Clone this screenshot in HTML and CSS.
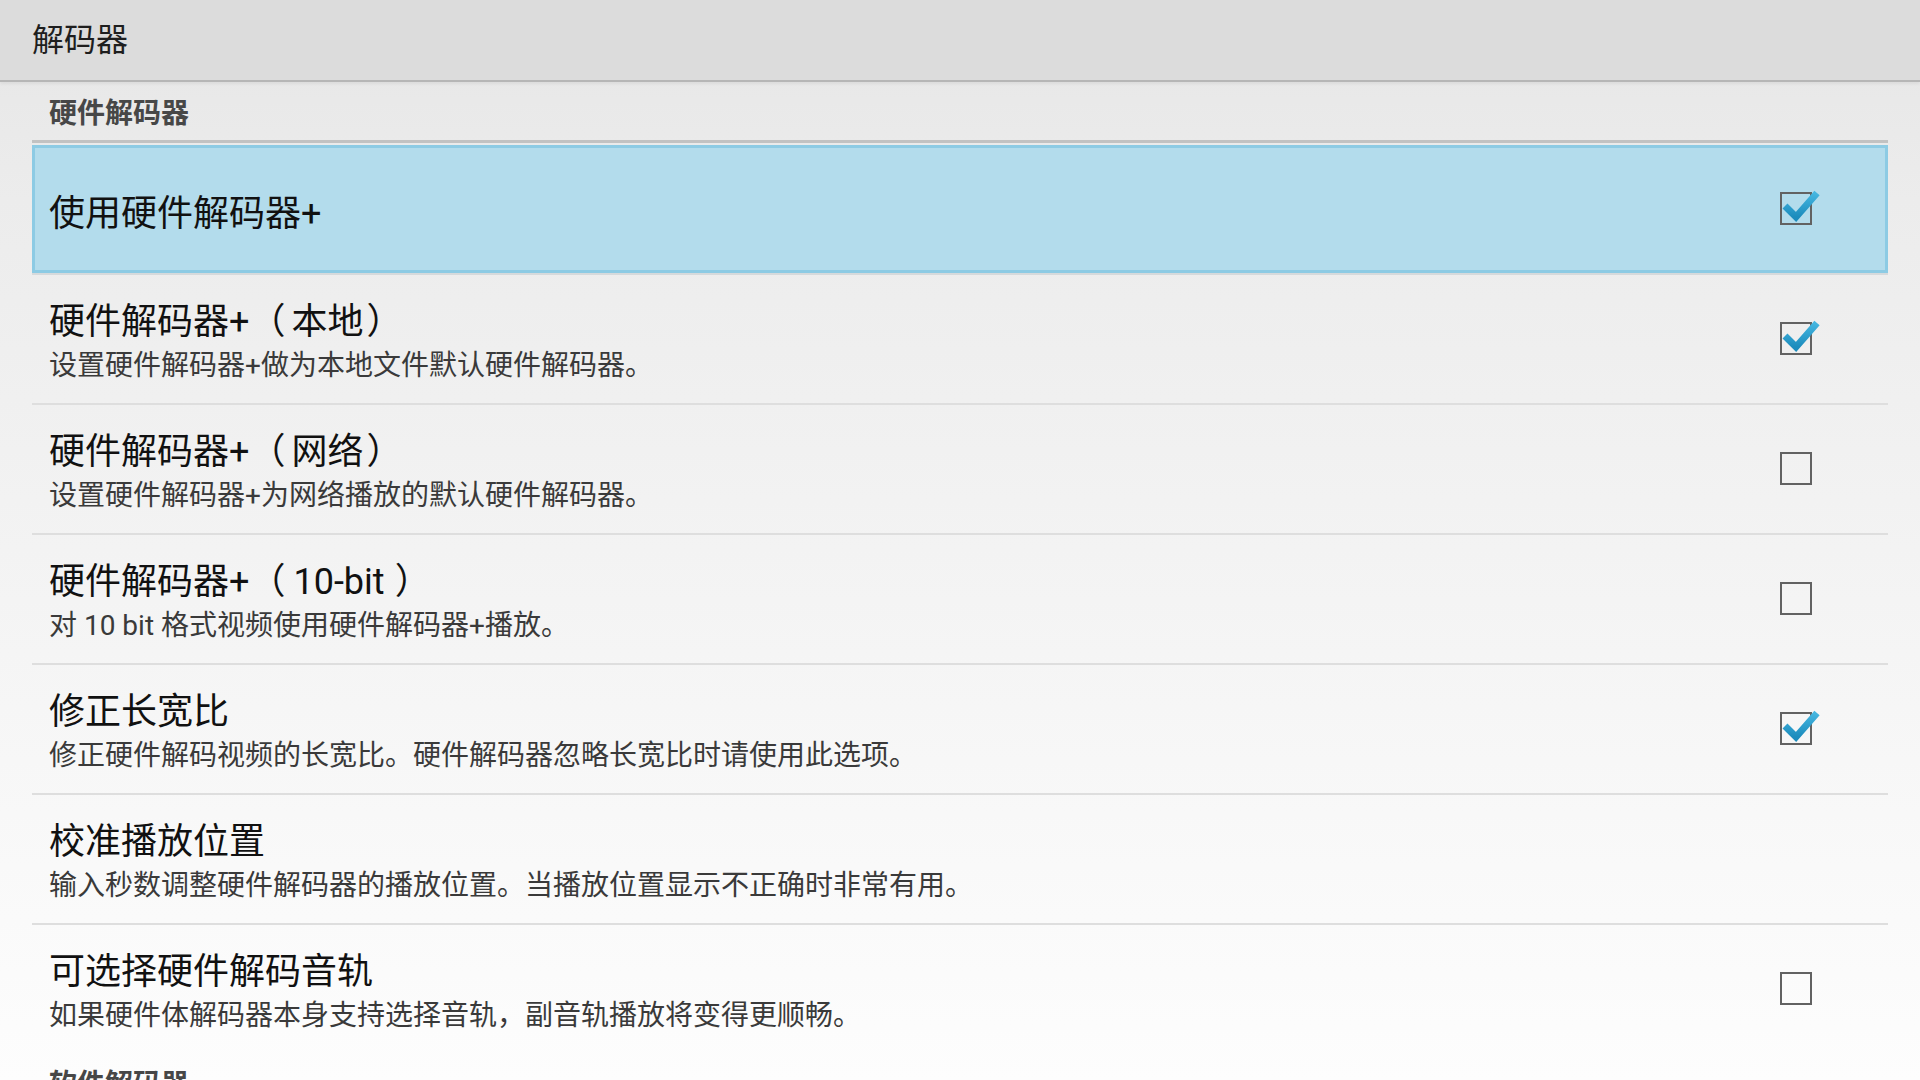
FILE: index.html
```html
<!DOCTYPE html>
<html lang="zh-CN">
<head>
<meta charset="utf-8">
<title>解码器</title>
<link rel="stylesheet" href="styles.css">
</head>
<body>
<header class="appbar">
  <h1 class="appbar-title">解码器</h1>
</header>

<main class="settings">
  <h2 class="category">硬件解码器</h2>

  <div class="pref selected">
    <div class="pref-text">
      <div class="pref-title">使用硬件解码器+</div>
    </div>
    <svg class="checkbox" viewBox="0 0 42 40" width="42" height="40" aria-hidden="true">
      <defs>
        <linearGradient id="tick" x1="0" y1="0" x2="0" y2="1">
          <stop offset="0" stop-color="#45b6e0"/>
          <stop offset="1" stop-color="#1c8cbd"/>
        </linearGradient>
      </defs>
      <rect class="box" x="1" y="4" width="30" height="31"/>
      <path class="tick" d="M5 17 L16 28 L37 4"/>
    </svg>
  </div>

  <div class="pref">
    <div class="pref-text">
      <div class="pref-title">硬件解码器+<span class="paren-open">（</span>本地<span class="paren-close">）</span></div>
      <div class="pref-summary">设置硬件解码器+做为本地文件默认硬件解码器。</div>
    </div>
    <svg class="checkbox" viewBox="0 0 42 40" width="42" height="40" aria-hidden="true">
      <rect class="box" x="1" y="4" width="30" height="31"/>
      <path class="tick" d="M5 17 L16 28 L37 4"/>
    </svg>
  </div>

  <div class="pref">
    <div class="pref-text">
      <div class="pref-title">硬件解码器+<span class="paren-open">（</span>网络<span class="paren-close">）</span></div>
      <div class="pref-summary">设置硬件解码器+为网络播放的默认硬件解码器。</div>
    </div>
    <svg class="checkbox" viewBox="0 0 42 40" width="42" height="40" aria-hidden="true">
      <rect class="box" x="1" y="4" width="30" height="31"/>
    </svg>
  </div>

  <div class="pref">
    <div class="pref-text">
      <div class="pref-title">硬件解码器+<span class="paren-open latin">（</span>10-bit<span class="paren-close latin">）</span></div>
      <div class="pref-summary">对 10 bit 格式视频使用硬件解码器+播放。</div>
    </div>
    <svg class="checkbox" viewBox="0 0 42 40" width="42" height="40" aria-hidden="true">
      <rect class="box" x="1" y="4" width="30" height="31"/>
    </svg>
  </div>

  <div class="pref">
    <div class="pref-text">
      <div class="pref-title">修正长宽比</div>
      <div class="pref-summary">修正硬件解码视频的长宽比。硬件解码器忽略长宽比时请使用此选项。</div>
    </div>
    <svg class="checkbox" viewBox="0 0 42 40" width="42" height="40" aria-hidden="true">
      <rect class="box" x="1" y="4" width="30" height="31"/>
      <path class="tick" d="M5 17 L16 28 L37 4"/>
    </svg>
  </div>

  <div class="pref">
    <div class="pref-text">
      <div class="pref-title">校准播放位置</div>
      <div class="pref-summary">输入秒数调整硬件解码器的播放位置。当播放位置显示不正确时非常有用。</div>
    </div>
  </div>

  <div class="pref last">
    <div class="pref-text">
      <div class="pref-title">可选择硬件解码音轨</div>
      <div class="pref-summary">如果硬件体解码器本身支持选择音轨，副音轨播放将变得更顺畅。</div>
    </div>
    <svg class="checkbox" viewBox="0 0 42 40" width="42" height="40" aria-hidden="true">
      <rect class="box" x="1" y="4" width="30" height="31"/>
    </svg>
  </div>

  <h2 class="category">软件解码器</h2>
</main>
</body>
</html>
```

FILE: styles.css
```css
* {
  box-sizing: border-box;
}

html, body {
  margin: 0;
  padding: 0;
}

body {
  width: 1920px;
  height: 1080px;
  overflow: hidden;
  font-family: Roboto, "Noto Sans CJK SC", sans-serif;
  color: #151515;
  background: linear-gradient(to bottom, #e6e6e6 0px, #ececec 200px, #f4f4f4 600px, #fdfdfd 1080px);
}

/* top action bar */
.appbar {
  height: 82px;
  background: #dcdcdc;
  border-bottom: 2px solid #b6b6b6;
  box-shadow: 0 2px 3px rgba(0, 0, 0, 0.06);
  display: flex;
  align-items: center;
  padding-left: 32px;
}

.appbar-title {
  margin: 0;
  font-size: 32px;
  font-weight: 400;
  line-height: 40px;
  color: #1e1e1e;
}

/* preference list */
.settings {
  padding: 0 32px;
}

.category {
  margin: 0 0 2px;
  padding: 18px 0 12px 17px;
  font-size: 28px;
  line-height: 28px;
  font-weight: 700;
  color: #474747;
  border-bottom: 3px solid #c2c2c2;
}

.pref {
  display: flex;
  align-items: center;
  min-height: 130px;
  border-bottom: 2px solid #dedede;
  padding: 0 66px 0 17px;
}

.pref.last {
  border-bottom: none;
  min-height: 128px;
}

.pref.selected {
  background: #b3dcec;
  box-shadow: inset 0 0 0 3px #8dcbe4;
  border-bottom-color: #d6dadc;
}

.pref-text {
  flex: 1;
  padding: 25px 0 15px;
}

.pref-title {
  font-size: 36px;
  line-height: 44px;
  color: #111;
}

/* full-width brackets get a little air on the inner side */
.paren-open,
.paren-close {
  display: inline-block;
}

.paren-open {
  margin-right: 6px;
}

.paren-close {
  margin-left: 3px;
}

.paren-open.latin {
  margin-right: 8px;
}

.paren-close.latin {
  margin-left: 10px;
}

.pref-summary {
  font-size: 28px;
  line-height: 44px;
  color: #3a3a3a;
}

.checkbox {
  flex: none;
  display: block;
  overflow: visible;
}

.checkbox .box {
  fill: none;
  stroke: #626262;
  stroke-width: 2;
}

.checkbox .tick {
  fill: none;
  stroke: url(#tick);
  stroke-width: 7;
  stroke-linejoin: miter;
  stroke-linecap: butt;
}
```
